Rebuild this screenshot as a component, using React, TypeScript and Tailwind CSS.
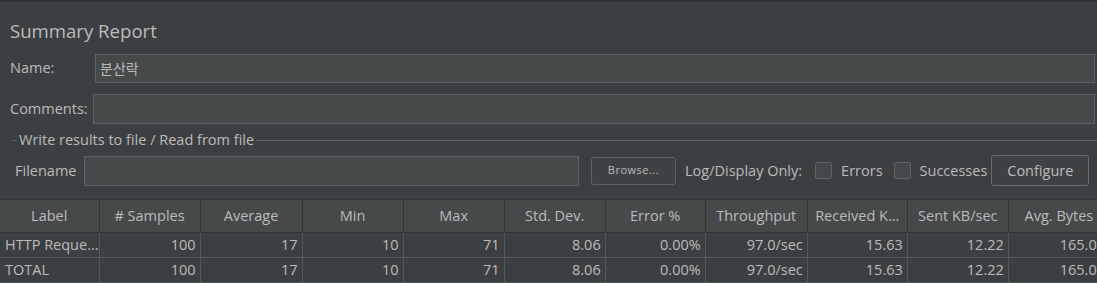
import React from "react";

const columns = [
  { title: "Label", w: 99 },
  { title: "# Samples", w: 101 },
  { title: "Average", w: 102 },
  { title: "Min", w: 101 },
  { title: "Max", w: 101 },
  { title: "Std. Dev.", w: 101 },
  { title: "Error %", w: 100 },
  { title: "Throughput", w: 102 },
  { title: "Received K...", w: 100 },
  { title: "Sent KB/sec", w: 101 },
  { title: "Avg. Bytes", w: 101 },
];

const rows = [
  ["HTTP Reque...", "100", "17", "10", "71", "8.06", "0.00%", "97.0/sec", "15.63", "12.22", "165.00"],
  ["TOTAL", "100", "17", "10", "71", "8.06", "0.00%", "97.0/sec", "15.63", "12.22", "165.00"],
];

const Checkbox: React.FC<{ label: string }> = ({ label }) => (
  <label className="flex items-center">
    <span className="w-[17px] h-[17px] rounded-[2px] border border-[#5f6364] bg-[#43494a]" />
    <span className="ml-[9px]">{label}</span>
  </label>
);

const App: React.FC = () => {
  return (
    <div
      className="w-[1097px] h-[283px] overflow-hidden bg-[#3c3f41] text-[#bbbbbb] text-[14.5px]"
      style={{ fontFamily: '"Open Sans", "Noto Sans CJK KR", sans-serif' }}
    >
      <div className="h-[2px] bg-[#2f3133]" />

      {/* Titulo */}
      <div className="pl-[10px] pt-[16px] h-[51px] text-[18.6px] leading-[26px]">Summary Report</div>

      {/* Nombre */}
      <div className="flex items-center h-[30px] pl-[10px] pr-[2px]">
        <span className="w-[85px]">Name:</span>
        <div className="flex-1 h-[29px] bg-[#45494a] border border-[#5e6162] px-[4px] flex items-center text-[14px]">
          분산락
        </div>
      </div>

      {/* Comentarios */}
      <div className="flex items-center h-[30px] mt-[11px] pl-[10px] pr-[2px]">
        <span className="w-[83px]">Comments:</span>
        <div className="flex-1 h-[30px] bg-[#45494a] border border-[#5e6162]" />
      </div>

      {/* Archivo */}
      <div className="flex items-center mt-[8px] h-[16px] pl-[13px]">
        <span className="w-[4px] h-px bg-[#5e6162]" />
        <span className="px-[2px]">Write results to file / Read from file</span>
        <span className="flex-1 h-px bg-[#5e6162]" />
      </div>

      <div className="flex items-center h-[31px] mt-[7px] pl-[15px]">
        <span className="w-[69px]">Filename</span>
        <div className="w-[495px] h-[30px] bg-[#45494a] border border-[#5e6162]" />
        <button className="ml-[12px] w-[85px] h-[28px] rounded-[3px] border border-[#5e6162] bg-[#3f4244] text-[11px] tracking-[0.5px] text-[#bbbbbb]">
          Browse...
        </button>
        <span className="ml-[9px]">Log/Display Only:</span>
        <div className="ml-[13px]">
          <Checkbox label="Errors" />
        </div>
        <div className="ml-[11px]">
          <Checkbox label="Successes" />
        </div>
        <button className="ml-[4px] w-[98px] h-[31px] rounded-[3px] border border-[#666a6b] bg-[#3f4244] text-[14.5px] text-[#bbbbbb]">
          Configure
        </button>
      </div>

      {/* Tabla de resultados */}
      <div className="mt-[13px]">
        <table className="border-collapse table-fixed text-[14.5px]" style={{ width: 1110 }}>
          <colgroup>
            {columns.map((c) => (
              <col key={c.title} style={{ width: c.w }} />
            ))}
          </colgroup>
          <thead>
            <tr className="h-[33px] bg-[#45494a]">
              {columns.map((c) => (
                <th
                  key={c.title}
                  className="font-normal text-center border-t border-t-[#323436] border-b border-b-[#323436] border-r border-r-[#323436] whitespace-nowrap overflow-hidden"
                >
                  {c.title}
                </th>
              ))}
            </tr>
          </thead>
          <tbody>
            {rows.map((r, i) => (
              <tr key={i} className="h-[25px]">
                {r.map((v, j) => (
                  <td
                    key={j}
                    className={
                      j === 0
                        ? "text-left pl-[5px] border-b border-r border-[#545859] whitespace-nowrap overflow-hidden"
                        : "text-right pr-[4px] border-b border-r border-[#545859] whitespace-nowrap overflow-hidden"
                    }
                  >
                    {v}
                  </td>
                ))}
              </tr>
            ))}
          </tbody>
        </table>
      </div>
    </div>
  );
};

export default App;
